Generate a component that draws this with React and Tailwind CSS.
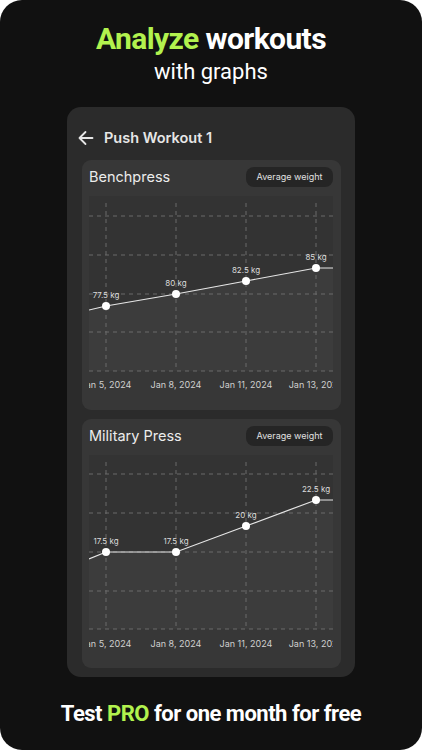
import React from "react";

const VX = [17, 87, 157, 227];
const DATES = ["Jan 5, 2024", "Jan 8, 2024", "Jan 11, 2024", "Jan 13, 2024"];

function Chart({ hy, vTop, bottom, pts, start, end, labels }) {
  const line = [[0, start], ...VX.map((x, i) => [x, pts[i]]), [244, end]];
  const lineStr = line.map((p) => p.join(",")).join(" ");
  const fillStr = `${lineStr} 244,${bottom} 0,${bottom}`;
  return (
    <svg width="244" height="200" viewBox="0 0 244 200" className="block overflow-hidden">
      <rect x="0" y="0" width="244" height={bottom} fill="#333333" />
      <polygon points={fillStr} fill="#3c3c3c" />
      {hy.map((y) => (
        <line key={"h" + y} x1="0" x2="244" y1={y} y2={y} stroke="#6a6a6a" strokeWidth="1" strokeDasharray="4 4" />
      ))}
      {VX.map((x) => (
        <line key={"v" + x} x1={x} x2={x} y1={vTop} y2={bottom} stroke="#6a6a6a" strokeWidth="1" strokeDasharray="4 4" />
      ))}
      <polyline points={lineStr} fill="none" stroke="#e6e6e6" strokeWidth="1.2" />
      {VX.map((x, i) => (
        <g key={"p" + x}>
          <circle cx={x} cy={pts[i]} r="4" fill="#ffffff" />
          <text x={x} y={pts[i] - 8} textAnchor="middle" fontSize="8" fill="#dcdcdc" fontFamily="Inter, sans-serif">
            {labels[i]}
          </text>
        </g>
      ))}
      {VX.map((x, i) => (
        <text key={"d" + x} x={x} y="192" textAnchor="middle" fontSize="9" fill="#d0d0d0" fontFamily="Inter, sans-serif">
          {DATES[i]}
        </text>
      ))}
    </svg>
  );
}

function Card({ title, children, h }) {
  return (
    <div className={`bg-[#373737] rounded-[9px] ${h} flex flex-col`}>
      <div className="flex items-center justify-between pl-[7px] pr-[8px] pt-[7px] h-[27px]">
        <span className="text-[14.5px] text-[#ececec] leading-none" style={{ fontFamily: "Inter, sans-serif" }}>
          {title}
        </span>
        <span className="w-[87px] h-[20px] rounded-[8px] bg-[#252525] flex items-center justify-center text-[9px] text-[#e0e0e0]" style={{ fontFamily: "Inter, sans-serif" }}>
          Average weight
        </span>
      </div>
      <div className="pl-[7px] pt-[9px]">{children}</div>
    </div>
  );
}

export default function App() {
  return (
    <div className="w-[422px] h-[750px] bg-white">
      <div className="w-full h-full bg-[#111111] rounded-[22px] flex flex-col items-center" style={{ fontFamily: "Roboto, sans-serif" }}>
        <div className="mt-[22px] text-[30px] font-bold leading-[34px] tracking-[-0.6px] text-white">
          <span className="text-[#b2f24e]">Analyze</span> workouts
        </div>
        <div className="mt-[3px] text-[22px] leading-[26px] text-white">with graphs</div>
        <div className="mt-[22px] w-[288px] h-[570px] bg-[#2b2b2b] rounded-[14px] px-[15px] pr-[14px] flex flex-col">
          <div className="h-[53px] flex items-center gap-[10px] -ml-[4px] pt-[9px] text-[#e6e6e6]">
            <svg width="16" height="16" viewBox="0 0 16 16" fill="none" stroke="#e6e6e6" strokeWidth="1.8" strokeLinecap="round" strokeLinejoin="round">
              <path d="M14.5 8H1.5M7.5 2L1.5 8L7.5 14" />
            </svg>
            <span className="text-[14.5px] font-semibold" style={{ fontFamily: "Inter, sans-serif" }}>Push Workout 1</span>
          </div>
          <div className="flex flex-col gap-[9px]">
            <Card title="Benchpress" h="h-[250px]">
              <Chart
                hy={[20, 59, 98, 136, 175]}
                vTop={7}
                bottom={175}
                pts={[110, 98, 85, 72]}
                start={114}
                end={72}
                labels={["77.5 kg", "80 kg", "82.5 kg", "85 kg"]}
              />
            </Card>
            <Card title="Military Press" h="h-[249px]">
              <Chart
                hy={[19, 58, 97, 136, 174]}
                vTop={7}
                bottom={174}
                pts={[97, 97, 71, 45]}
                start={104}
                end={45}
                labels={["17.5 kg", "17.5 kg", "20 kg", "22.5 kg"]}
              />
            </Card>
          </div>
        </div>
        <div className="mt-[23px] text-[22px] font-bold leading-[28px] text-white tracking-[-0.5px]">
          Test <span className="text-[#b2f24e]">PRO</span> for one month for free
        </div>
      </div>
    </div>
  );
}
